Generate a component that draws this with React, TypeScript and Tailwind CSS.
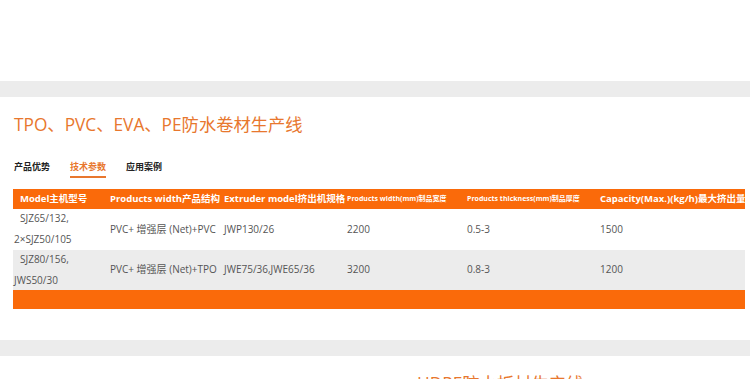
import React from "react";

const font = { fontFamily: '"Open Sans", "Noto Sans CJK SC", sans-serif' };

const rows = [
  {
    model: ["SJZ65/132,", "2×SJZ50/105"],
    structure: "PVC+ 增强层 (Net)+PVC",
    extruder: "JWP130/26",
    width: "2200",
    thickness: "0.5-3",
    capacity: "1500",
    bg: "bg-white",
  },
  {
    model: ["SJZ80/156,", "JWS50/30"],
    structure: "PVC+ 增强层 (Net)+TPO",
    extruder: "JWE75/36,JWE65/36",
    width: "3200",
    thickness: "0.8-3",
    capacity: "1200",
    bg: "bg-[#ececec]",
  },
];

export default function App() {
  return (
    <div className="flex h-[379px] w-[750px] flex-col overflow-hidden bg-white" style={font}>
      <div className="h-[81px] shrink-0 bg-white" />
      <div className="h-[16px] shrink-0 bg-[#ececec]" />

      <section className="flex shrink-0 flex-col pt-[15px]">
        <h1 className="pl-[14px] text-[17.3px] leading-[26px] text-[#e8772e]">TPO、PVC、EVA、PE防水卷材生产线</h1>

        <div className="mt-[22px] flex gap-[20px] pl-[14px] text-[9px] font-bold leading-[14px] text-[#222]">
          <span className="pb-[4px]">产品优势</span>
          <span className="border-b-2 border-[#e8772e] pb-[2px] text-[#e8772e]">技术参数</span>
          <span className="pb-[4px]">应用案例</span>
        </div>

        <div className="mt-[11px] ml-[13px] flex w-[732px] flex-col">
          <div className="flex h-[20px] items-center overflow-hidden whitespace-nowrap bg-[#fa6a0a] font-bold text-white">
            <div className="w-[91px] shrink-0 pl-[7px] text-[9.5px]">Model主机型号</div>
            <div className="w-[114px] shrink-0 pl-[6px] text-[9.5px]">Products width产品结构</div>
            <div className="w-[123px] shrink-0 pl-[6px] text-[9.5px]">Extruder model挤出机规格</div>
            <div className="w-[120px] shrink-0 pl-[6px] text-[7px]">Products width(mm)制品宽度</div>
            <div className="w-[133px] shrink-0 pl-[6px] text-[7px]">Products thickness(mm)制品厚度</div>
            <div className="w-[151px] shrink-0 overflow-hidden pl-[6px] text-[9.5px]">Capacity(Max.)(kg/h)最大挤出量</div>
          </div>

          {rows.map(r => (
            <div key={r.extruder} className={`flex h-[40.5px] items-center text-[10px] text-[#555] ${r.bg}`}>
              <div className="flex w-[91px] shrink-0 flex-col pl-[1px] leading-[21px]">
                <span className="pl-[6px]">{r.model[0]}</span>
                <span>{r.model[1]}</span>
              </div>
              <div className="w-[114px] shrink-0 pl-[6px]">{r.structure}</div>
              <div className="w-[123px] shrink-0 pl-[6px]">{r.extruder}</div>
              <div className="w-[120px] shrink-0 pl-[6px]">{r.width}</div>
              <div className="w-[133px] shrink-0 pl-[6px]">{r.thickness}</div>
              <div className="w-[151px] shrink-0 pl-[6px]">{r.capacity}</div>
            </div>
          ))}

          <div className="h-[19px] bg-[#fa6a0a]" />
        </div>
      </section>

      <div className="mt-[31px] h-[16px] shrink-0 bg-[#ececec]" />

      <div className="flex shrink-0 pt-[15px]">
        <h2 className="pl-[417px] text-[17.3px] leading-[26px] text-[#e8772e]">HDPE防水板材生产线</h2>
      </div>
    </div>
  );
}
